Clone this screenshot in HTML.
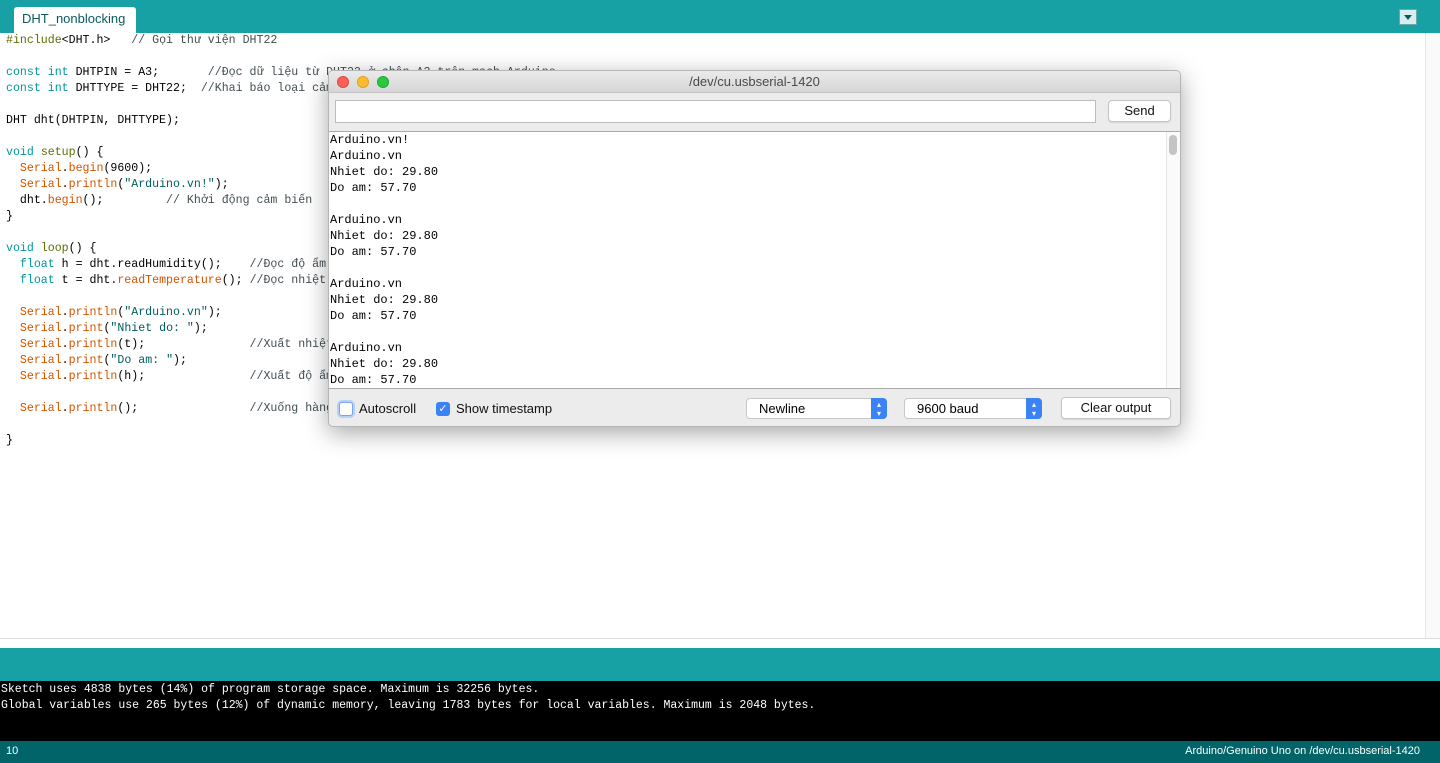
<!DOCTYPE html>
<html><head><meta charset="utf-8"><style>
*{margin:0;padding:0;box-sizing:border-box}
body{width:1440px;height:763px;overflow:hidden;background:#fff;font-family:"Liberation Sans",sans-serif;position:relative}
.top{position:absolute;left:0;top:0;width:1440px;height:33px;background:#17a1a5}
.tab{position:absolute;left:14px;top:7px;width:122px;height:26px;background:#fff;border-radius:3px 3px 0 0;font-size:13px;color:#0a5a5e;padding:4px 0 0 8px}
.dd{position:absolute;left:1399px;top:9px;width:18px;height:16px;background:#d8eeee;border:1px solid #6aa}
.dd:after{content:"";position:absolute;left:4px;top:5px;border-left:4px solid transparent;border-right:4px solid transparent;border-top:5px solid #0a5a5e}
pre{position:absolute;left:6px;top:33px;font-family:"Liberation Mono","DejaVu Sans Mono",monospace;font-size:11.6px;line-height:16px;color:#000}
.k{color:#00979c}.f{color:#d35400}.s{color:#005c5f}.p{color:#5e6d03}.c{color:#434f54}
.vs{position:absolute;left:1425px;top:33px;width:15px;height:605px;border-left:1px solid #e6e6e6;background:#fafafa}
.split{position:absolute;left:0;top:638px;width:1440px;height:10px;background:#fff;border-top:1px solid #ddd}
.tb{position:absolute;left:0;top:648px;width:1440px;height:33px;background:#17a1a5}
.con{position:absolute;left:0;top:681px;width:1440px;height:60px;background:#000;color:#fff;font-family:"Liberation Mono",monospace;font-size:11.5px;line-height:16px;padding:1px 0 0 1px;white-space:pre}
.st{position:absolute;left:0;top:741px;width:1440px;height:22px;background:#006468;color:#fff;font-size:11px;padding:4px 6px}
.st span{position:absolute;right:20px;top:4px}
.win{position:absolute;left:328px;top:70px;width:853px;height:357px;background:#ececec;border:1px solid #b5b5b5;border-radius:5px;box-shadow:0 6px 24px rgba(0,0,0,.35);overflow:hidden}
.tt{height:22px;background:linear-gradient(#ebebeb,#d6d6d6);border-bottom:1px solid #c3c3c3;text-align:center;font-size:13px;color:#4a4a4a;line-height:22px}
.dot{position:absolute;top:5px;width:12px;height:12px;border-radius:50%}
.inp{position:absolute;left:6px;top:29px;width:761px;height:23px;background:#fff;border:1px solid #bdbdbd}
.btn{position:absolute;background:#fff;border:1px solid #c5c5c5;border-radius:4px;font-size:13px;text-align:center;color:#111;box-shadow:0 1px 1px rgba(0,0,0,.1)}
.out{position:absolute;left:0;top:60px;width:852px;height:258px;background:#fff;border-top:1px solid #aaa;border-bottom:1px solid #aaa;font-family:"Liberation Mono",monospace;font-size:12px;line-height:16px;padding:0 0 0 1px;white-space:pre;color:#000}
.sb{position:absolute;right:4px;top:3px;width:8px;height:20px;background:#c4c4c4;border-radius:4px}
.sbt{position:absolute;right:0;top:0;width:15px;height:256px;border-left:1px solid #e8e8e8;background:#fafafa}
.cb{position:absolute;top:331px;width:14px;height:14px;border-radius:3px}
.lbl{position:absolute;top:330px;font-size:13px;color:#111}
.sel{position:absolute;top:327px;height:21px;background:#fff;border:1px solid #c8c8c8;border-radius:4px;font-size:13px;padding:2px 0 0 12px}
.sel i{position:absolute;right:-1px;top:-1px;width:16px;height:21px;background:#3b82f6;border-radius:0 4px 4px 0;color:#fff;font-size:8px;font-style:normal;text-align:center;line-height:9px;padding-top:2px}
</style></head><body>
<div class="top"><div class="tab">DHT_nonblocking</div><div class="dd"></div></div>
<pre><span class="p">#include</span>&lt;DHT.h&gt;   <span class="c">// Gọi thư viện DHT22</span>

<span class="k">const</span> <span class="k">int</span> DHTPIN = A3;       <span class="c">//Đọc dữ liệu từ DHT22 ở chân A3 trên mạch Arduino</span>
<span class="k">const</span> <span class="k">int</span> DHTTYPE = DHT22;  <span class="c">//Khai báo loại cảm biến</span>

DHT dht(DHTPIN, DHTTYPE);

<span class="k">void</span> <span class="p">setup</span>() {
  <span class="f">Serial</span>.<span class="f">begin</span>(9600);
  <span class="f">Serial</span>.<span class="f">println</span>(<span class="s">"Arduino.vn!"</span>);
  dht.<span class="f">begin</span>();         <span class="c">// Khởi động cảm biến</span>
}

<span class="k">void</span> <span class="p">loop</span>() {
  <span class="k">float</span> h = dht.readHumidity();    <span class="c">//Đọc độ ẩm</span>
  <span class="k">float</span> t = dht.<span class="f">readTemperature</span>(); <span class="c">//Đọc nhiệt độ</span>

  <span class="f">Serial</span>.<span class="f">println</span>(<span class="s">"Arduino.vn"</span>);
  <span class="f">Serial</span>.<span class="f">print</span>(<span class="s">"Nhiet do: "</span>);
  <span class="f">Serial</span>.<span class="f">println</span>(t);               <span class="c">//Xuất nhiệt độ</span>
  <span class="f">Serial</span>.<span class="f">print</span>(<span class="s">"Do am: "</span>);
  <span class="f">Serial</span>.<span class="f">println</span>(h);               <span class="c">//Xuất độ ẩm</span>

  <span class="f">Serial</span>.<span class="f">println</span>();                <span class="c">//Xuống hàng</span>

}</pre>
<div class="vs"></div>
<div class="split"></div>
<div class="tb"></div>
<div class="con">Sketch uses 4838 bytes (14%) of program storage space. Maximum is 32256 bytes.
Global variables use 265 bytes (12%) of dynamic memory, leaving 1783 bytes for local variables. Maximum is 2048 bytes.</div>
<div class="st">10<span>Arduino/Genuino Uno on /dev/cu.usbserial-1420</span></div>

<div class="win">
<div class="tt">/dev/cu.usbserial-1420</div>
<div class="dot" style="left:8px;background:#fc5f57;border:1px solid #de4a42"></div>
<div class="dot" style="left:28px;background:#fdbc2e;border:1px solid #dea123"></div>
<div class="dot" style="left:48px;background:#29c840;border:1px solid #1aab2c"></div>
<div class="inp"></div>
<div class="btn" style="left:779px;top:29px;width:63px;height:22px;line-height:20px">Send</div>
<div class="out">Arduino.vn!
Arduino.vn
Nhiet do: 29.80
Do am: 57.70

Arduino.vn
Nhiet do: 29.80
Do am: 57.70

Arduino.vn
Nhiet do: 29.80
Do am: 57.70

Arduino.vn
Nhiet do: 29.80
Do am: 57.70<div class="sbt"><div class="sb"></div></div></div>
<div class="cb" style="left:10px;background:#fff;border:1px solid #7aa7e6;box-shadow:0 0 0 2px #b5d1f7"></div>
<div class="lbl" style="left:30px">Autoscroll</div>
<div class="cb" style="left:107px;background:#3b82f6;color:#fff;font-size:11px;text-align:center;line-height:14px">✓</div>
<div class="lbl" style="left:127px">Show timestamp</div>
<div class="sel" style="left:417px;width:141px">Newline<i>▴<br>▾</i></div>
<div class="sel" style="left:575px;width:138px">9600 baud<i>▴<br>▾</i></div>
<div class="btn" style="left:732px;top:326px;width:110px;height:22px;line-height:20px">Clear output</div>
</div>
</body></html>
